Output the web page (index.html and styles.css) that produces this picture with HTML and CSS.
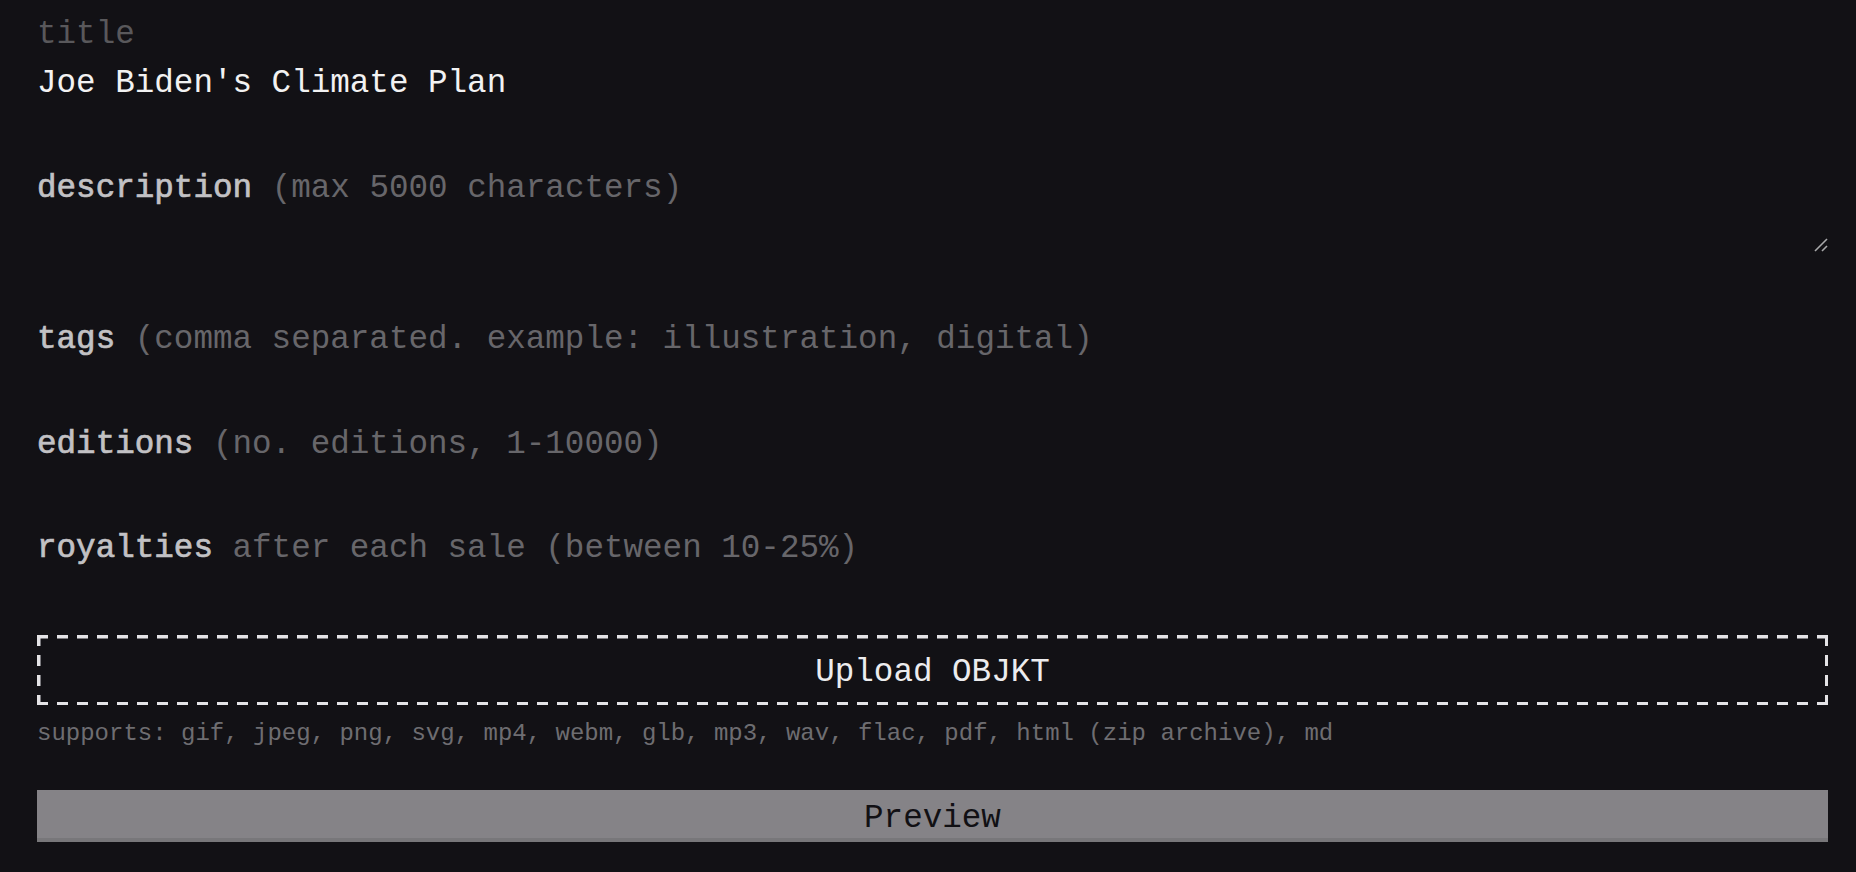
FILE: index.html
```html
<!DOCTYPE html>
<html lang="en">
<head>
<meta charset="utf-8">
<title>Mint OBJKT</title>
<link rel="stylesheet" href="styles.css">
</head>
<body>
<main class="form">
  <div class="field field-filled">
    <div class="float-label">title</div>
    <div class="value">Joe Biden's Climate Plan</div>
  </div>

  <div class="field field-area">
    <div class="placeholder"><span class="lbl">description</span> <span class="hint">(max 5000 characters)</span></div>
    <svg class="resizer" width="16" height="16" viewBox="0 0 16 16" aria-hidden="true">
      <line x1="2" y1="14" x2="14" y2="2" stroke="#a9a9ab" stroke-width="1.6"/>
      <line x1="9" y1="14" x2="14" y2="9" stroke="#a9a9ab" stroke-width="1.6"/>
    </svg>
  </div>

  <div class="field field-line">
    <div class="placeholder"><span class="lbl">tags</span> <span class="hint">(comma separated. example: illustration, digital)</span></div>
  </div>

  <div class="field field-line">
    <div class="placeholder"><span class="lbl">editions</span> <span class="hint">(no. editions, 1-10000)</span></div>
  </div>

  <div class="field field-line">
    <div class="placeholder"><span class="lbl">royalties</span> <span class="hint">after each sale (between 10-25%)</span></div>
  </div>

  <div class="upload">Upload OBJKT</div>
  <div class="supports">supports: gif, jpeg, png, svg, mp4, webm, glb, mp3, wav, flac, pdf, html (zip archive), md</div>

  <button class="preview" type="button">Preview</button>
</main>
</body>
</html>
```

FILE: styles.css
```css
html, body {
  margin: 0;
  padding: 0;
  background: #121115;
}

body {
  font-family: "Liberation Mono", "DejaVu Sans Mono", monospace;
  font-size: 32.6px;
  line-height: 40px;
  color: #f0f0f0;
}

.form {
  display: flex;
  flex-direction: column;
  padding: 15px 28px 0 37px;
}

.field {
  position: relative;
}

.float-label {
  height: 40px;
  color: #59585b;
}

.value {
  margin-top: 8.5px;
  height: 40px;
  color: #f2f2f2;
}

.field-area {
  margin-top: 65.5px;
  height: 88px;
}

.field-line {
  height: 40px;
}

.field-area + .field-line {
  margin-top: 63px;
}

.field-line + .field-line {
  margin-top: 64.5px;
}

.placeholder {
  white-space: nowrap;
}

.lbl {
  color: #c2c1c4;
  -webkit-text-stroke: 0.7px #c2c1c4;
}

.hint {
  color: #67666a;
}

.resizer {
  position: absolute;
  right: -1px;
  bottom: 4px;
}

.upload {
  margin-top: 66px;
  height: 70px;
  box-sizing: border-box;
  padding-top: 6px;
  display: flex;
  align-items: center;
  justify-content: center;
  color: #ececee;
  background-color: transparent;
  background-image:
    repeating-linear-gradient(90deg, #e4e3e6 0 11px, transparent 11px 20px),
    repeating-linear-gradient(90deg, #e4e3e6 0 11px, transparent 11px 20px),
    repeating-linear-gradient(180deg, #e4e3e6 0 11px, transparent 11px 20px),
    repeating-linear-gradient(180deg, #e4e3e6 0 11px, transparent 11px 20px);
  background-size: 100% 3.5px, 100% 3.5px, 3.5px 100%, 3.5px 100%;
  background-position: left top, left bottom, left top, right top;
  background-repeat: no-repeat;
}

.supports {
  margin-top: 14px;
  font-size: 24px;
  line-height: 30px;
  color: #6e6d71;
  white-space: nowrap;
}

.preview {
  margin-top: 41px;
  height: 52px;
  width: 100%;
  padding: 9px 0 0;
  border: none;
  border-bottom: 4px solid #78777a;
  background: #858387;
  color: #111014;
  font-family: inherit;
  font-size: 32.6px;
  line-height: 38px;
  display: flex;
  align-items: center;
  justify-content: center;
}
```
